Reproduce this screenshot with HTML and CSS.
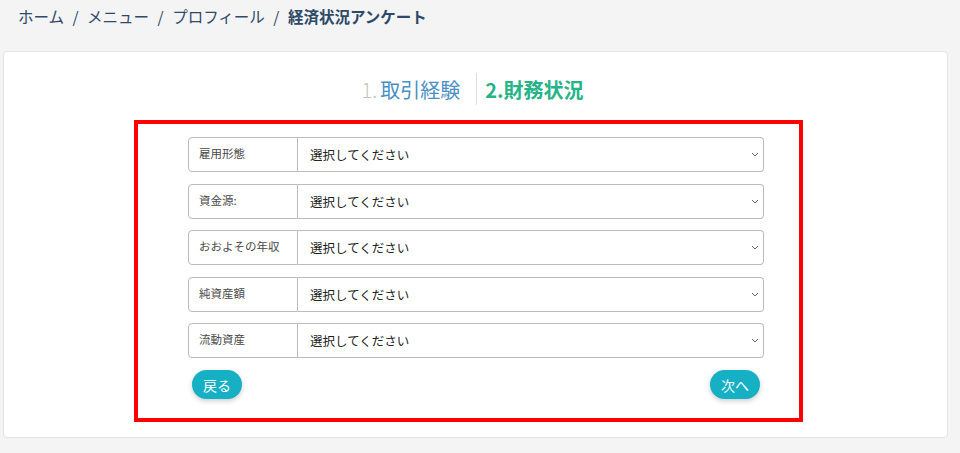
FILE: index.html
```html
<!DOCTYPE html>
<html lang="ja">
<head>
    <meta charset="UTF-8">
    <meta name="viewport" content="width=device-width, initial-scale=1.0">
    <title>経済状況アンケート</title>
    <link rel="stylesheet" href="styles.css">
</head>
<body>

    <nav class="breadcrumb">
        <a href="#">ホーム</a>
        <span class="sep">/</span>
        <a href="#">メニュー</a>
        <span class="sep">/</span>
        <a href="#">プロフィール</a>
        <span class="sep">/</span>
        <span class="current">経済状況アンケート</span>
    </nav>

    <div class="card">
        <div class="steps">
            <span class="step done"><span class="num">1.</span>取引経験</span>
            <span class="divider"></span>
            <span class="step active">2.財務状況</span>
        </div>

        <div class="highlight">
            <form class="survey">
                <div class="row">
                    <label class="row-label" for="employment">雇用形態</label>
                    <select id="employment" class="row-select">
                        <option>選択してください</option>
                    </select>
                </div>
                <div class="row">
                    <label class="row-label" for="source">資金源:</label>
                    <select id="source" class="row-select">
                        <option>選択してください</option>
                    </select>
                </div>
                <div class="row">
                    <label class="row-label" for="income">おおよその年収</label>
                    <select id="income" class="row-select">
                        <option>選択してください</option>
                    </select>
                </div>
                <div class="row">
                    <label class="row-label" for="networth">純資産額</label>
                    <select id="networth" class="row-select">
                        <option>選択してください</option>
                    </select>
                </div>
                <div class="row">
                    <label class="row-label" for="liquid">流動資産</label>
                    <select id="liquid" class="row-select">
                        <option>選択してください</option>
                    </select>
                </div>

                <div class="actions">
                    <button type="button" class="btn">戻る</button>
                    <button type="button" class="btn">次へ</button>
                </div>
            </form>
        </div>
    </div>

</body>
</html>
```

FILE: styles.css
```css
body {
    font-family: "Noto Sans CJK JP", "Noto Sans", sans-serif;
    margin: 0;
    padding: 0;
    background: #f4f4f4;
    color: #333;
}
.breadcrumb {
    padding: 3px 0 0 18px;
    height: 48px;
    box-sizing: border-box;
    font-size: 15.5px;
    line-height: 26px;
    color: #2e4a68;
}
.breadcrumb a {
    color: #2e4a68;
    text-decoration: none;
}
.breadcrumb .sep {
    padding: 0 5px;
}
.breadcrumb .current {
    font-weight: bold;
}
.card {
    margin: 3px 12px 15px 3px;
    background: #fff;
    border: 1px solid #e3e3e8;
    border-radius: 4px;
    padding: 20px 0 15px;
}
/* Step header */
.steps {
    display: flex;
    justify-content: center;
    align-items: center;
    height: 34px;
    margin-bottom: 14px;
    padding-right: 6px;
    font-size: 20px;
}
.step.done {
    color: #4a8fc4;
}
.step.done .num {
    color: #c4c4c4;
    font-weight: 300;
    margin-right: 3px;
}
.divider {
    width: 1px;
    height: 32px;
    background: #ddd;
    margin: 0 8px 0 16px;
}
.step.active {
    color: #26b388;
    font-weight: bold;
}
/* Red outline around the form */
.highlight {
    width: 669px;
    box-sizing: border-box;
    margin-left: 130px;
    border: 4px solid #ff0000;
    padding: 13px 35px 19px 50px;
}
.row {
    display: flex;
    height: 35px;
    margin-bottom: 11.5px;
}
.row-label {
    width: 110px;
    box-sizing: border-box;
    border: 1px solid #bbb;
    border-radius: 4px 0 0 4px;
    padding: 6px 10px;
    font-size: 11.5px;
    line-height: 18px;
    color: #4a4a4a;
}
.row-select {
    flex: 1;
    margin: 0;
    border: 1px solid #bbb;
    border-left: none;
    border-radius: 0 4px 4px 0;
    background: #fff url("data:image/svg+xml,%3Csvg xmlns='http://www.w3.org/2000/svg' width='8' height='5' viewBox='0 0 8 5'%3E%3Cpath d='M1 1l3 3 3-3' fill='none' stroke='%23666' stroke-width='1'/%3E%3C/svg%3E") no-repeat right 4px center;
    appearance: none;
    -webkit-appearance: none;
    padding: 0 20px 0 12px;
    font-family: inherit;
    font-size: 12.5px;
    color: #222;
}
.actions {
    display: flex;
    justify-content: space-between;
    padding: 0 4px;
    margin-top: 12px;
}
.btn {
    height: 29px;
    padding: 0 11px;
    border: none;
    border-radius: 15px;
    background: #15b0c4;
    color: #fff;
    font-family: inherit;
    font-size: 14px;
    box-shadow: 0 2px 5px rgba(0, 0, 0, 0.2);
    cursor: pointer;
}
```
